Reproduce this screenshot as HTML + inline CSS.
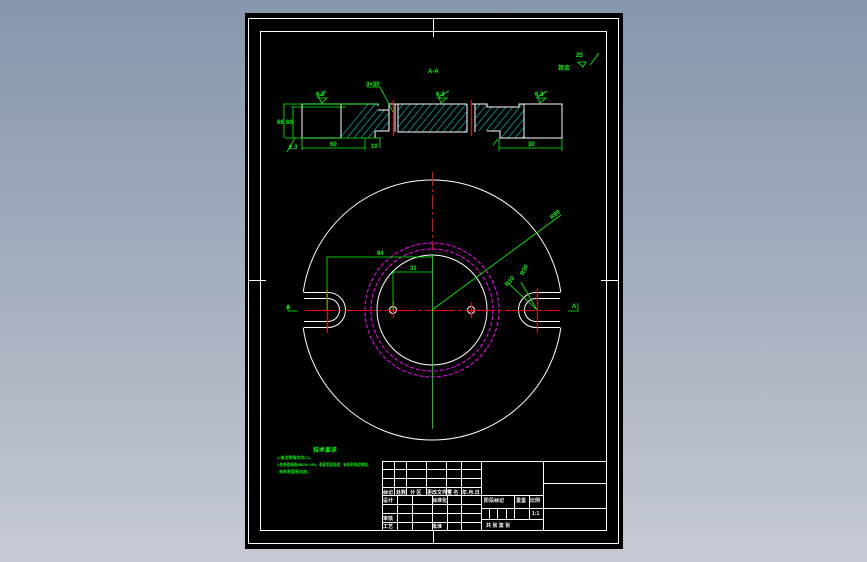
<!DOCTYPE html>
<html><head><meta charset="utf-8"><style>
html,body{margin:0;padding:0}
body{width:867px;height:562px;overflow:hidden;background:linear-gradient(#8696ad,#a7b1c0 55%,#c6cad3);font-family:"Liberation Sans","Noto Sans CJK SC",sans-serif}
svg{position:absolute;left:0;top:0}
</style></head><body>
<svg width="867" height="562" viewBox="0 0 867 562">
<rect x="245" y="13" width="378" height="536" fill="#000"/>
<g fill="none" stroke="#fff" stroke-width="1">
<rect x="248.5" y="18.5" width="370" height="525"/>
<rect x="260.5" y="31.5" width="346" height="499"/>
<line x1="433.5" y1="18" x2="433.5" y2="37"/>
<line x1="433.5" y1="531" x2="433.5" y2="543"/>
<line x1="248" y1="280.5" x2="266" y2="280.5"/>
<line x1="601" y1="280.5" x2="619" y2="280.5"/>
</g>
<g fill="none" stroke="#0ff" stroke-width="0.6" opacity="0.8">
<clipPath id="c1"><path d="M341 104H378V110H389V131H375V138H341Z M398 104H467V132H398Z M475 104H487V107H519V104H524V138H500V131H475Z"/></clipPath>
<g clip-path="url(#c1)">
<path d="M330 150L380 90M337 150L387 90M344 150L394 90M351 150L401 90M358 150L408 90M365 150L415 90M372 150L422 90M379 150L429 90M386 150L436 90M393 150L443 90M400 150L450 90M407 150L457 90M414 150L464 90M421 150L471 90M428 150L478 90M435 150L485 90M442 150L492 90M449 150L499 90M456 150L506 90M463 150L513 90M470 150L520 90M477 150L527 90M484 150L534 90M491 150L541 90M498 150L548 90M505 150L555 90M512 150L562 90M519 150L569 90"/>
</g></g>
<g fill="none" stroke="#fff" stroke-width="1">
<path d="M302 104H378V106M302 104V138H341M341 104V138M389 104V131M398 104V132H467V104M389 104H467M472 104H487V107H519V104H562V138H500V131H487"/>
<path d="M378 110H389M375 131H389M375 131V138"/>
<line x1="524" y1="104" x2="524" y2="138"/>
<line x1="341" y1="104" x2="341" y2="138"/>
<line x1="395" y1="104" x2="395" y2="132"/>
<line x1="475" y1="104" x2="475" y2="132"/>
</g>
<g stroke="#f00" stroke-width="1"><line x1="393.5" y1="100" x2="393.5" y2="136"/><line x1="471.5" y1="100" x2="471.5" y2="136"/></g>
<g fill="none" stroke="#0f0" stroke-width="0.8">
<path d="M283 104H378M291 107H346M285 138H381M284 104V138M293 107V138M302 138V150M365 138V150M302 148H365M380 138V148M499 138V151M562 138V151M499 148H562"/>
<path d="M367 87H380L393 112M317 98L326 91M319 98H327L322 103ZM437 98L449 91M439 98H447L441 103ZM536 98L547 91M538 98H546L540 103ZM590 65L599 53M578 62H586L583 67Z"/>
<path d="M287 152L295 138M498 139L493 145"/>
</g>
<g fill="#0f0" font-size="6" font-weight="bold">
<text x="428" y="73">A-A</text>
<text x="366" y="86">3×30</text>
<text x="316" y="96">6.3</text>
<text x="436" y="96">6.3</text>
<text x="535" y="96">6.3</text>
<text x="576" y="57">25</text>
<text x="558" y="70">其余</text>
<text x="277" y="124">66</text>
<text x="286" y="124">60</text>
<text x="330" y="146">60</text>
<text x="371" y="148">10</text>
<text x="528" y="146">30</text>
<text x="289" y="149">6.3</text>
</g>
<circle cx="432" cy="310" r="130" fill="none" stroke="#fff" stroke-width="1"/>
<rect x="300" y="292.5" width="30" height="35" fill="#000"/>
<rect x="535" y="292.5" width="30" height="35" fill="#000"/>
<g fill="none" stroke="#fff" stroke-width="1">
<path d="M304 292.5H328A17.5 17.5 0 0 1 328 327.5H304M304 298.5H328A11.5 11.5 0 0 1 328 321.5H304"/>
<path d="M560 292.5H536A17.5 17.5 0 0 0 536 327.5H560M560 298.5H536A11.5 11.5 0 0 0 536 321.5H560"/>
<circle cx="432" cy="310" r="55"/>
<circle cx="393" cy="310" r="3.5"/><circle cx="471" cy="310" r="3.5"/>
</g>
<g fill="none" stroke="#f0f" stroke-width="1" stroke-dasharray="4,2">
<circle cx="432" cy="310" r="61"/><circle cx="432" cy="310" r="67"/>
</g>
<g stroke="#f00" stroke-width="1">
<path d="M305 310.5H560" stroke-dasharray="30,3,4,3"/>
<line x1="432.5" y1="172" x2="432.5" y2="250" stroke-dasharray="14,3,3,3"/>
<line x1="327.5" y1="290" x2="327.5" y2="333"/><line x1="537.5" y1="288" x2="537.5" y2="333"/>
<line x1="393.5" y1="302" x2="393.5" y2="318"/><line x1="471.5" y1="302" x2="471.5" y2="318"/>
</g>
<g fill="none" stroke="#0f0" stroke-width="0.8">
<line x1="432.5" y1="254" x2="432.5" y2="429"/>
<path d="M327 257H432M327 257V310M393 272H432M393 272V310M432 310L561 215M537 310L521 282M537 310L507 282M288 305V311H298M578 303V311H568"/>
</g>
<g fill="#0f0" font-size="6" font-weight="bold">
<text x="377" y="255">94</text><text x="410" y="270">31</text>
<text x="550" y="218" transform="rotate(-40 553 216)">R90</text>
<text x="520" y="274" transform="rotate(-65 523 272)">R20</text>
<text x="505" y="285" transform="rotate(-50 508 283)">R10</text>
<text x="286" y="309">A</text><text x="572" y="308">A</text>
<text x="313" y="452">技术要求</text>
</g>
<g fill="#0f0" font-size="4" font-weight="bold">
<text x="277" y="459">1.未注倒角均为C1。</text>
<text x="277" y="466" textLength="94" lengthAdjust="spacingAndGlyphs">2.热处理调质HB220~250，表面发蓝处理，去毛刺锐边倒钝。</text>
<text x="279" y="473">去除表面氧化皮。</text>
</g>
<g fill="none" stroke="#fff" stroke-width="1">
<path d="M382.5 461V530M382 461.5H607M481.5 461V530M543.5 461V530"/>
<path d="M382 469.5H481M382 478.5H481M382 487.5H481M382 495.5H543M382 504.5H481M382 513.5H481M382 522.5H481"/>
<path d="M394.5 461V495M406.5 461V495M426.5 461V495M446.5 461V495M461.5 461V530"/>
<path d="M397.5 495V530M412.5 495V530M432.5 495V530M447.5 495V530"/>
<path d="M481 508.5H543M481 519.5H543M514.5 495V519M529.5 495V519M489.5 508V519M497.5 508V519M506.5 508V519"/>
<path d="M543 483.5H607M543 508.5H607"/>
</g>
<g fill="#fff" font-size="5" font-weight="bold">
<text x="383" y="494">标记</text><text x="396" y="494">处数</text><text x="410" y="494">分 区</text><text x="427" y="494">更改文件号</text><text x="447" y="494">签 名</text><text x="462" y="494">年.月.日</text>
<text x="383" y="502">设计</text><text x="432" y="502">标准化</text>
<text x="383" y="520">审核</text><text x="383" y="528">工艺</text><text x="432" y="528">批准</text>
<text x="484" y="502">阶段标记</text><text x="516" y="502">重量</text><text x="530" y="502">比例</text>
<text x="532" y="515">1:1</text>
<text x="486" y="527">共  张  第  张</text>
</g>
</svg>
</body></html>
